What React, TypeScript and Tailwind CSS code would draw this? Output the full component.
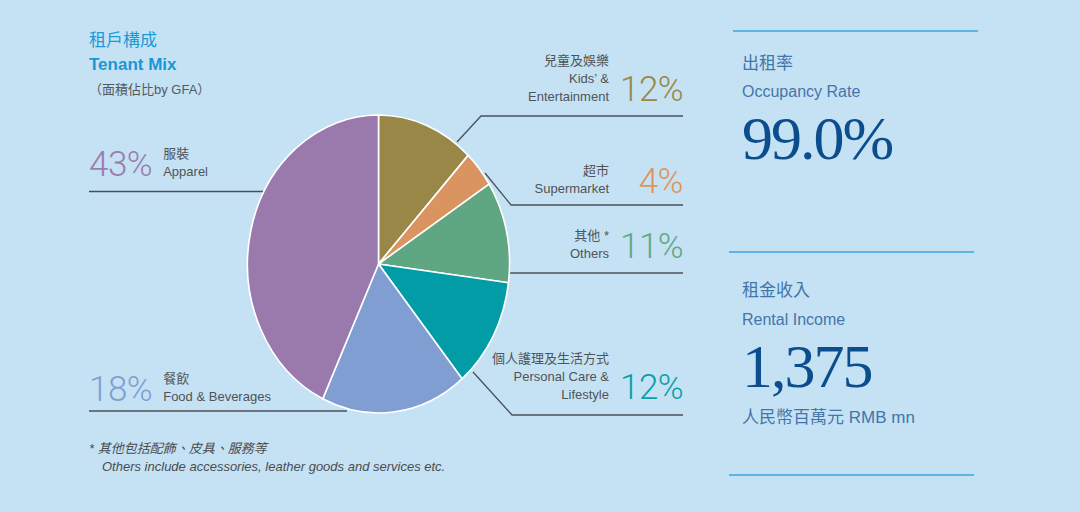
import React from "react";

const CX = 378.5;
const CY = 264;
const RX = 131;
const RY = 149;

const slices = [
  { p: 12, c: "#998747" },
  { p: 4, c: "#da9460" },
  { p: 11, c: "#5fa683" },
  { p: 12, c: "#019ca6" },
  { p: 18, c: "#809ed1" },
  { p: 43, c: "#9a7aac" },
];

function pt(frac: number) {
  const t = frac * Math.PI * 2;
  return [CX + RX * Math.sin(t), CY - RY * Math.cos(t)];
}

function Pie() {
  let acc = 0;
  return (
    <g>
      {slices.map((s, i) => {
        const a0 = acc / 100;
        acc += s.p;
        const a1 = acc / 100;
        const [x0, y0] = pt(a0);
        const [x1, y1] = pt(a1);
        const large = s.p > 50 ? 1 : 0;
        const d = `M ${CX} ${CY} L ${x0} ${y0} A ${RX} ${RY} 0 ${large} 1 ${x1} ${y1} Z`;
        return (
          <path
            key={i}
            d={d}
            fill={s.c}
            stroke="#ffffff"
            strokeWidth={1.6}
            strokeLinejoin="round"
          />
        );
      })}
    </g>
  );
}

const sans = "font-['Liberation_Sans','Noto_Sans_CJK_TC',sans-serif]";

function RightLabel({
  top,
  lines,
  pct,
  color,
}: {
  top: string;
  lines: string[];
  pct: string;
  color: string;
}) {
  return (
    <div className={`absolute right-[46px] ${top} flex [align-items:last_baseline] gap-[11px]`}>
      <div className="text-right text-[13px] leading-[18px] text-[#505357]">
        {lines.map((l, i) => (
          <div key={i}>{l}</div>
        ))}
      </div>
      <div
        className={`w-[63px] text-right font-['Roboto',sans-serif] font-light text-[35px] leading-none tracking-[-0.5px] ${color}`}
      >
        {pct}
      </div>
    </div>
  );
}

function LeftLabel({
  top,
  lines,
  pct,
  color,
}: {
  top: string;
  lines: string[];
  pct: string;
  color: string;
}) {
  return (
    <div className={`absolute left-[89px] ${top} flex [align-items:last_baseline] gap-[11px]`}>
      <div
        className={`font-['Roboto',sans-serif] font-light text-[35px] leading-none tracking-[-0.5px] ${color}`}
      >
        {pct}
      </div>
      <div className="text-left text-[13px] leading-[18px] text-[#505357]">
        {lines.map((l, i) => (
          <div key={i}>{l}</div>
        ))}
      </div>
    </div>
  );
}

export default function App() {
  return (
    <div className={`w-[1080px] h-[512px] bg-[#c5e2f4] flex overflow-hidden ${sans}`}>
      {/* Left: tenant mix chart */}
      <div className="relative w-[729px] h-[512px] shrink-0 flex flex-col">
        <svg
          className="absolute inset-0"
          width={729}
          height={512}
          viewBox="0 0 729 512"
        >
          <g stroke="#4b5058" strokeWidth={1.3} fill="none">
            <path d="M457 142 L481 116 L683 116" />
            <path d="M485 173 L511 205 L683 205" />
            <path d="M509 273 L683 273" />
            <path d="M473 372 L512 415 L683 415" />
            <path d="M89 191.5 L265 191.5" />
            <path d="M89 411 L347 411" />
          </g>
          <Pie />
        </svg>

        <div className="relative pl-[89px] pt-[30px]">
          <div className="text-[17px] leading-[22px] text-[#1b9ad7]">租戶構成</div>
          <div className="mt-[2px] text-[17px] leading-[22px] font-bold text-[#1b96d5]">
            Tenant Mix
          </div>
          <div className="mt-[5px] text-[13px] leading-[18px] text-[#55585c]">
            （面積佔比by GFA）
          </div>
        </div>

        <LeftLabel top="top-[145px]" lines={["服裝", "Apparel"]} pct="43%" color="text-[#9b7db0]" />
        <LeftLabel
          top="top-[370px]"
          lines={["餐飲", "Food & Beverages"]}
          pct="18%"
          color="text-[#7f9fd2]"
        />

        <RightLabel
          top="top-[52px]"
          lines={["兒童及娛樂", "Kids’ &", "Entertainment"]}
          pct="12%"
          color="text-[#9c8744]"
        />
        <RightLabel
          top="top-[162px]"
          lines={["超市", "Supermarket"]}
          pct="4%"
          color="text-[#e0935c]"
        />
        <RightLabel
          top="top-[227px]"
          lines={["其他 *", "Others"]}
          pct="11%"
          color="text-[#5fa883]"
        />
        <RightLabel
          top="top-[350px]"
          lines={["個人護理及生活方式", "Personal Care &", "Lifestyle"]}
          pct="12%"
          color="text-[#0aa0a8]"
        />

        <div className="relative mt-auto pb-[36px] pl-[89px] text-[13px] leading-[18px] italic text-[#4a4c50]">
          <div>* 其他包括配飾、皮具、服務等</div>
          <div className="pl-[13px]">Others include accessories, leather goods and services etc.</div>
        </div>
      </div>

      {/* Right: stats */}
      <div className="flex flex-col w-[260px]">
        <div className="mt-[30px] ml-[4px] w-[245px] h-[2px] bg-[#5bb5e6]" />
        <div className="pl-[13px]">
          <div className="mt-[21px] text-[17px] leading-[22px] text-[#4475aa]">出租率</div>
          <div className="mt-[6px] text-[16px] leading-[22px] text-[#4475aa]">Occupancy Rate</div>
          <div className="mt-[4px] font-['Liberation_Serif',serif] text-[62px] leading-[62px] tracking-[-2px] text-[#0b4d8d]">
            99.0%
          </div>
        </div>
        <div className="mt-[82px] w-[245px] h-[2px] bg-[#5bb5e6]" />
        <div className="pl-[13px]">
          <div className="mt-[27px] text-[17px] leading-[22px] text-[#4475aa]">租金收入</div>
          <div className="mt-[7px] text-[16px] leading-[22px] text-[#4475aa]">Rental Income</div>
          <div className="mt-[4px] font-['Liberation_Serif',serif] text-[62px] leading-[62px] tracking-[-2px] text-[#0b4d8d]">
            1,375
          </div>
          <div className="mt-[10px] text-[17px] leading-[22px] text-[#4475aa]">人民幣百萬元 RMB mn</div>
        </div>
        <div className="mt-[45px] w-[245px] h-[2px] bg-[#5bb5e6]" />
      </div>
    </div>
  );
}
